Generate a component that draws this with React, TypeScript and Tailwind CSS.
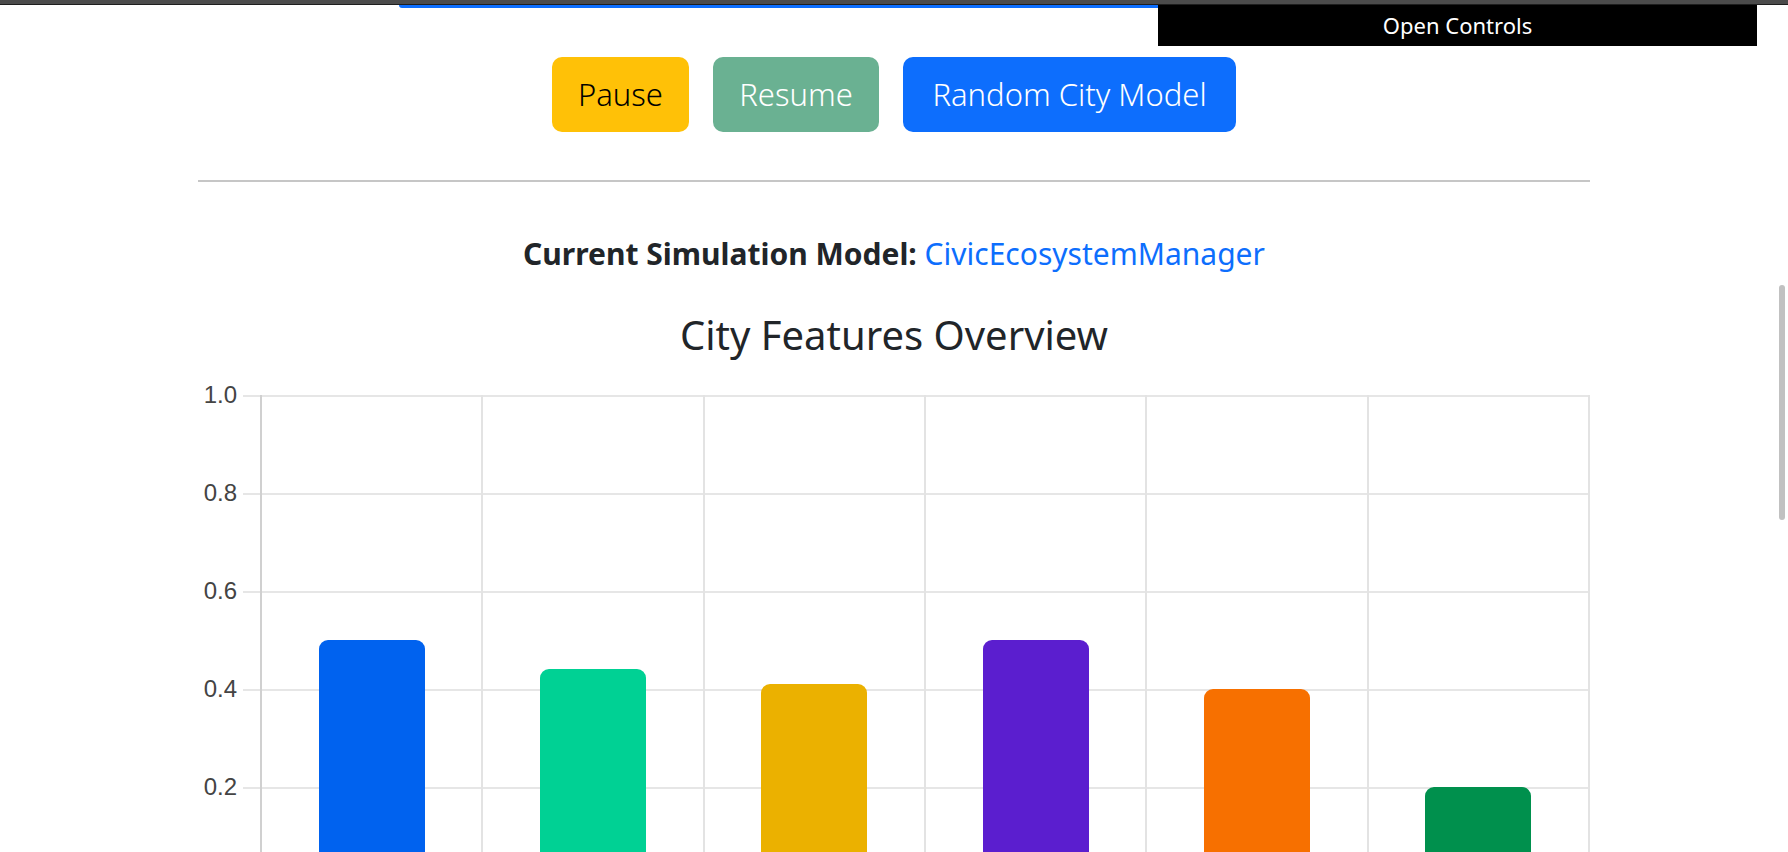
import React from "react";

const bars = [
  { v: 0.5, c: "#0062ef" },
  { v: 0.44, c: "#00d194" },
  { v: 0.41, c: "#ebb100" },
  { v: 0.5, c: "#5b1ecf" },
  { v: 0.4, c: "#f77000" },
  { v: 0.2, c: "#00904d" },
];

const yLabels = ["1.0", "0.8", "0.6", "0.4", "0.2"];

export default function App() {
  return (
    <div
      className="relative w-full h-[852px] overflow-hidden bg-white"
      style={{ fontFamily: "'Noto Sans', 'Open Sans', sans-serif" }}
    >
      <div className="h-[5px] bg-[#4b4b4b] border-b border-[#1e1e1e]" />

      {/* top blue strip */}
      <div className="absolute left-[399px] top-[5px] w-[762px] h-[3px] bg-[#0d6efd] rounded-bl-[3px]" />

      {/* Open Controls overlay */}
      <div className="absolute left-[1158px] top-[5px] w-[599px] h-[41px] bg-black flex items-center justify-center text-white text-[22px]">
        Open Controls
      </div>

      {/* scrollbar thumb */}
      <div className="absolute left-[1779px] top-[285px] w-[6px] h-[235px] rounded-full bg-[#c1c1c1]" />

      <div className="flex flex-col items-center">
        <div className="mt-[52px] flex gap-[24px]">
          <button className="w-[137px] h-[75px] rounded-[10px] bg-[#ffc107] text-black text-[31px] font-light flex items-center justify-center">
            Pause
          </button>
          <button className="w-[166px] h-[75px] rounded-[10px] bg-[#6ab192] text-white text-[31px] font-light flex items-center justify-center">
            Resume
          </button>
          <button className="w-[333px] h-[75px] rounded-[10px] bg-[#0d6efd] text-white text-[31px] font-light flex items-center justify-center">
            Random City Model
          </button>
        </div>
      </div>

      <div className="ml-[198px] w-[1392px] mt-[48px] h-[2px] bg-[#c6c6c6]" />

      <div className="flex flex-col items-center">
        <p className="mt-[54px] h-[36px] leading-[36px] text-[30px] text-[#212529]">
          <span className="font-bold">Current Simulation Model:</span>{" "}
          <span className="text-[#0d6efd]">CivicEcosystemManager</span>
        </p>
        <h2 className="mt-[41px] h-[44px] leading-[44px] text-[40px] text-[#212529]">
          City Features Overview
        </h2>
      </div>

      {/* chart */}
      <div
        className="mt-[38px] ml-[198px] w-[1392px] flex"
        style={{ fontFamily: "'Liberation Sans', Arial, sans-serif" }}
      >
        <div className="w-[62px] flex flex-col">
          {yLabels.map((l) => (
            <div key={l} className="h-[98px] relative">
              <span className="absolute right-[23px] -top-[14px] text-[24px] leading-[28px] text-[#444]">
                {l}
              </span>
            </div>
          ))}
        </div>
        <div className="relative flex-1 h-[490px]">
          <div className="absolute -left-[17px] right-0 top-0 flex flex-col">
            {yLabels.map((l) => (
              <div key={l} className="h-[98px] border-t-2 border-[#e6e6e6]" />
            ))}
          </div>
          <div className="relative grid grid-cols-6 h-[490px] border-l-2 border-[#d0d0d0]">
            {bars.map((b, i) => (
              <div
                key={i}
                className="flex items-end justify-center border-r-2 border-[#e3e3e3]"
              >
                <div
                  className="w-[106px] rounded-t-[9px]"
                  style={{ height: `${b.v * 490}px`, backgroundColor: b.c }}
                />
              </div>
            ))}
          </div>
        </div>
      </div>
    </div>
  );
}
